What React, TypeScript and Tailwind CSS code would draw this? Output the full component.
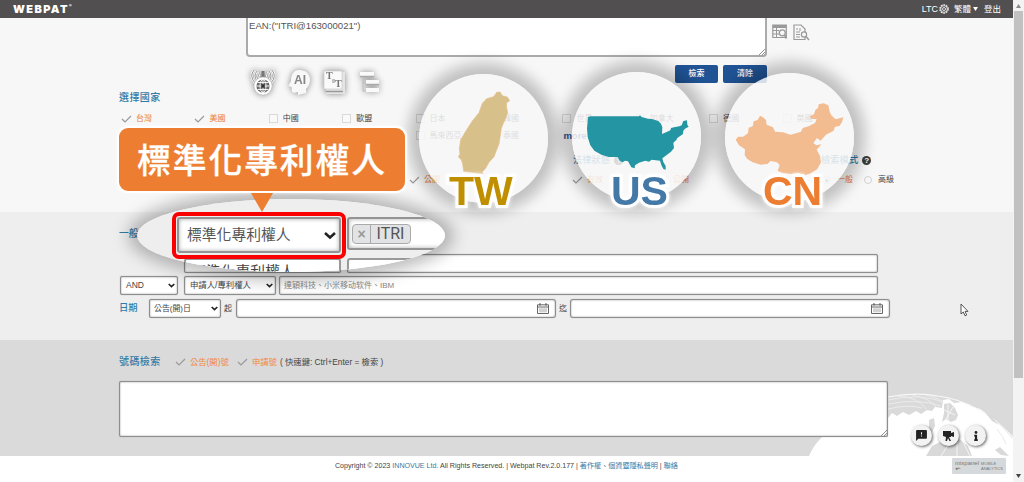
import React from "react";
import { MdFeedback } from "react-icons/md";
import { FaInfo } from "react-icons/fa";

const field =
  "rounded-[2px] border border-[#8e8e8e] bg-white shadow-[inset_0_0_2px_#999,0_0_1px_#999]";

function Tick() {
  return (
    <svg className="h-[8px] w-[11px] shrink-0" viewBox="0 0 11 8" fill="none" stroke="#9a9a9a" strokeWidth="1.2">
      <path d="M1 4 4 7 10 1" />
    </svg>
  );
}

function Box() {
  return <span className="ml-px h-[9px] w-[9px] shrink-0 border border-[#d9d9d9] bg-[#f9f9f9]" />;
}

function Country({ name, on = false }: { name: string; on?: boolean }) {
  return (
    <div className="flex items-center whitespace-nowrap">
      <span className="flex w-[16px] shrink-0 pl-px">{on ? <Tick /> : <Box />}</span>
      <span className={on ? "text-[#ed7d31]" : "text-[#444]"}>{name}</span>
    </div>
  );
}

function Help() {
  return (
    <span className="flex h-[9px] w-[9px] items-center justify-center rounded-full bg-[#3b3b3b] text-[8px] font-bold leading-none text-white">
      ?
    </span>
  );
}

function Select({ label, className }: { label: string; className: string }) {
  return (
    <div className={`${field} flex h-[19px] items-center justify-between ${className}`}>
      <span className="whitespace-nowrap">{label}</span>
      <svg className="mr-[2px] h-[5px] w-[7px]" viewBox="0 0 7 5" fill="none" stroke="#222" strokeWidth="1.6">
        <path d="M.7 1 3.5 3.7 6.3 1" />
      </svg>
    </div>
  );
}

function DateInput() {
  return (
    <div className={`${field} flex h-[19px] w-[320px] items-center justify-end rounded-[3px] pr-[6px]`}>
      <svg className="h-[11px] w-[12px]" viewBox="0 0 12 11" fill="none" stroke="#666" strokeWidth="1">
        <path d="M.5 1.8h11v8.7H.5zM.5 4h11" />
        <path d="M3 .2v2.3M9 .2v2.3" strokeWidth="1.4" />
        <path d="M3 5.3v4M5 5.3v4M7 5.3v4M9 5.3v4" strokeWidth=".6" />
      </svg>
    </div>
  );
}

function Grip() {
  return (
    <svg className="h-[6px] w-[6px]" viewBox="0 0 6 6" stroke="#777" strokeWidth=".8">
      <path d="M0 6 6 0M3 6 6 3" />
    </svg>
  );
}

function ToolIcons() {
  return (
    <svg
      className="h-[36px] w-[144px] overflow-visible drop-shadow-[0_0_3px_rgba(0,0,0,0.45)]"
      viewBox="0 0 144 36"
    >
      <g fill="none" stroke="#888" strokeWidth=".9">
        <path d="M8 6q-5 6 1 13M11 7q-4 5 0 10M13.500 8.500q-2 3 0 6M26 6q5 6-1 13M23 7q4 5 0 10M20.500 8.500q2 3 0 6" stroke="#fff" strokeWidth="2.200" />
        <path d="M8 6q-5 6 1 13M11 7q-4 5 0 10M13.500 8.500q-2 3 0 6M26 6q5 6-1 13M23 7q4 5 0 10M20.500 8.500q2 3 0 6" />
      </g>
      <path d="M15.500 7h3v7h-3z" fill="#777" />
      <circle cx="17" cy="22" r="9" fill="#fff" stroke="#bbb" strokeWidth=".5" />
      <circle cx="17" cy="22" r="6.600" fill="#6a6a6a" />
      <g fill="none" stroke="#fff" strokeWidth=".9">
        <ellipse cx="17" cy="22" rx="3" ry="6.600" />
        <path d="M10.400 22h13.200M17 15.400v13.200M11.500 18.500h11M11.500 25.500h11" />
      </g>
      <rect x="15.300" y="20.300" width="3.400" height="3.400" fill="#333" />
      <path d="M53 6c7 0 11 4 11 10 0 4-2 7-4 9v4l-8 2v-3c-3 1-6 1-6-1l-.500-4-3-1 2.500-5c0-7 3-11 8-11z" fill="#f8f8f8" />
      <text x="48" y="20" fontFamily="Liberation Sans" fontWeight="700" fontSize="12" fill="#858585">
        AI
      </text>
      <path d="M80 8h19v22H80z" fill="#e4e4e4" />
      <path d="M78 7h18v18H78z" fill="#fafafa" stroke="#ccc" strokeWidth=".7" />
      <path d="M80 27.500h17" stroke="#999" strokeWidth="1.500" />
      <g fontFamily="Liberation Serif" fontWeight="700" fill="#777">
        <text x="80" y="15" fontSize="10">T</text>
        <text x="89" y="23" fontSize="10">T</text>
      </g>
      <path d="M86 16h3M86 18h3" stroke="#888" />
      <path d="M117 12v15h6M117 19h6" fill="none" stroke="#bbb" />
      <path d="M114 8h14v4h-14zM120 16h13v4h-13zM120 24h13v4h-13z" fill="#fafafa" />
      <path d="M114 12.500h14M120 20.500h13" stroke="#aaa" strokeWidth="1.500" />
    </svg>
  );
}

function ResultIcons() {
  return (
    <svg className="ml-[5px] mt-[6px] h-[18px] w-[38px]" viewBox="0 0 38 18" fill="none" stroke="#999">
      <path d="M.8 1h13.500v12.500H.8z" strokeWidth="1.200" />
      <path d="M.8 2.500h13.500" strokeWidth="3" />
      <path d="M1 6.500h6M1 10h6M4.500 4v10" strokeWidth="1" />
      <circle cx="10.300" cy="8.800" r="3" fill="#f7f7f7" strokeWidth="1.300" />
      <path d="m12.500 11 2 3.500" strokeWidth="1.700" />
      <path d="M22 1h7l4 4v10.500H22z" strokeWidth="1.200" />
      <path d="M24 5h2M24 8h4M24 10.500h4M24 13h4M28 4v3" strokeWidth="1" />
      <circle cx="32" cy="10.500" r="2.600" fill="#f7f7f7" strokeWidth="1.200" />
      <path d="m34 12.500 3 3.500" strokeWidth="1.500" />
    </svg>
  );
}

const bubble =
  "absolute h-[129px] w-[129px] rounded-full bg-[#f7f7f7]/85 shadow-[0_0_14px_11px_rgba(0,0,0,0.22)]";
const code =
  "absolute whitespace-nowrap text-[41px] font-bold leading-none [-webkit-text-stroke:6px_white] [paint-order:stroke_fill] drop-shadow-[0_0_2px_rgba(255,255,255,0.9)]";

function CountryBubbles() {
  return (
    <>
      <div className={`${bubble} left-[419px] top-[74px]`}>
        <svg className="h-full w-full" viewBox="57 42 387 387" fill="#d8c08a" stroke="#e8bd8d" strokeWidth="2">
          <path d="M290 97 300 96 307 107 322 111 329 122 319 129 320 143 323 158 317 175 310 190 304 205 301 226 297 252 289 272 282 290 267 307 256 326 247 335 248 341 191 334 188 312 184 299 175 291 180 282 178 267 182 239 199 211 217 183 237 158 247 130 260 116 281 110Z" />
        </svg>
        <span className={`${code} left-[30px] top-[97px] text-[#bf8f00]`}>TW</span>
      </div>
      <div className={`${bubble} left-[572px] top-[72px]`}>
        <svg className="h-full w-full" viewBox="6 36 387 387" fill="#2495a3">
          <path d="M54 171 61 169 207 169 210 166 215 171 234 176 246 177 265 183 273 191 277 202 276 222 290 216 301 211 303 204 312 202 328 199 335 196 340 183 351 181 352 194 356 200 345 206 340 212 339 222 322 234 319 240 310 248 312 264 303 275 286 288 277 295 280 306 287 318 287 329 280 327 274 315 270 302 245 299 237 305 226 302 207 308 195 316 194 325 184 322 174 304 165 302 158 307 149 302 143 291 116 291 94 284 73 272 61 256 53 231 51 205Z" />
        </svg>
        <span className={`${code} left-[39px] top-[99px] text-[#4478a7]`}>US</span>
      </div>
      <div className={`${bubble} left-[725px] top-[73px]`}>
        <svg className="h-full w-full" viewBox="76 217 387 387" fill="#f2bb90">
          <path d="M108 417 115 408 130 408 145 398 147 381 159 377 162 362 174 358 181 345 190 350 199 358 201 372 220 380 226 393 250 395 272 402 289 398 304 393 309 382 327 377 346 367 351 356 333 354 331 347 343 341 347 328 355 322 357 311 372 308 386 314 390 333 395 344 408 356 431 350 427 365 419 376 406 378 402 390 379 402 363 420 352 412 341 427 350 434 365 431 351 447 361 466 364 485 353 505 334 518 316 524 295 516 274 520 249 517 234 511 240 493 232 485 213 481 203 490 183 492 159 485 142 474 135 463 136 446 118 434Z" />
        </svg>
        <span className={`${code} left-[38px] top-[98px] text-[#ed7d31]`}>CN</span>
      </div>
    </>
  );
}

function Magnifier() {
  return (
    <>
      <div className="absolute left-[137px] top-[199px] h-[73px] w-[308px] overflow-hidden rounded-[50%] bg-[#eee]">
        <div className="flex gap-[6px] pl-[40px] pt-[18px]">
          <div className="flex h-[36px] w-[164px] shrink-0 items-center justify-between rounded-[3px] border-2 border-[#949494] bg-white pl-[8px] pr-[3px] shadow-[inset_0_0_4px_#aaa]">
            <span className="whitespace-nowrap text-[14.800px] leading-none text-[#555]">標準化專利權人</span>
            <svg className="h-[9px] w-[12px]" viewBox="0 0 12 9" fill="none" stroke="#222" strokeWidth="2.600">
              <path d="m1 2 5 4.500L11 2" />
            </svg>
          </div>
          <div className="flex h-[33px] w-[130px] shrink-0 items-center rounded-[3px] border-2 border-[#949494] bg-white pl-[3px] shadow-[inset_0_0_4px_#aaa]">
            <div className="flex h-[20px] items-stretch rounded-[4px] border border-[#aaa] bg-[#e2e3e4]">
              <span className="flex w-[18px] items-center justify-center border-r border-[#aaa] text-[14px] font-bold leading-none text-[#999]">
                ×
              </span>
              <span className="flex w-[39px] items-center justify-center font-['Roboto',sans-serif] text-[16px] leading-none text-[#555]">ITRI</span>
            </div>
          </div>
        </div>
        <div className="flex gap-[6px] pl-[47px] pt-[5px]">
          <div className="h-[30px] w-[157px] shrink-0 rounded-t-[3px] border-2 border-[#999] bg-white pl-[5px] pt-[3px] text-[14.800px] leading-[18px] text-[#444]">
            標準化專利權人
          </div>
          <div className="h-[30px] w-[130px] shrink-0 rounded-t-[3px] border-2 border-[#999] bg-white" />
        </div>
      </div>
      <div className="absolute left-[172px] top-[212px] h-[47px] w-[174px] rounded-[7px] border-4 border-[#fb0000]" />
      <div className="absolute left-[117px] top-[126px] flex h-[67px] w-[290px] items-center justify-center rounded-[11px] border-2 border-white bg-[#ed7d31] pb-[2px] font-['Noto_Sans_CJK_TC',sans-serif] text-[33.800px] font-medium leading-none tracking-[1.900px] text-white shadow-[0_0_3px_rgba(255,255,255,0.8)] [-webkit-text-stroke:0.3px_white]">
        <span className="whitespace-nowrap">標準化專利權人</span>
      </div>
      <svg className="absolute left-[251px] top-[193px] h-[19px] w-[22px]" viewBox="0 0 22 19" fill="#ed7d31">
        <path d="M0 0h22L11 19Z" />
      </svg>
    </>
  );
}

function Globe() {
  return (
    <svg className="absolute bottom-0 right-0 h-[63px] w-[205px]" viewBox="808 393 205 63">
      <path
        d="M809 456Q813 446 822 437H888V418L892 413 897 416 903 412 909 415 916 411 921 414 927 410 932 411 935 407 942 408 943 400 949 399 954 403 962 402 971 406 980 409 990 416 1000 424 1007 431 1013 438V456Z"
        fill="#fff"
      />
      <path d="M888 397Q915 392 938 396 978 401 1013 437" fill="none" stroke="#f7f7f7" strokeWidth="1.200" />
      <g fill="none" stroke="#efefef" strokeWidth=".8">
        <path d="M888 400q32-7 56 2M888 404q30-6 53 2M888 409q20-5 34-1M898 396q20 1 28 13M912 395q18 3 24 12M926 395q14 3 17 8" />
      </g>
      <path
        d="M944 404 950 403 955 408 958 415 956 420 951 422 946 419 942 422 944 413ZM929 420 934 418 935 426 932 432 929 430ZM926 456 932 446 942 441 958 438 968 446 972 456ZM995 450 1000 447 1009 456 1001 455ZM984 411 992 417 999 425 992 421Z"
        fill="#d9d9d9"
      />
      <g fill="none" stroke="#fafafa" strokeWidth=".8">
        <path d="M948 404v17M953 407l-7 12M942 409l13 6M951 440l-10 16M957 438v18M962 440l8 16" />
      </g>
      <path d="M996 420q9 9 16 18M1006 444q-3-8-9-15" fill="none" stroke="#e3e3e3" strokeWidth=".8" />
    </svg>
  );
}

const roundBtn =
  "flex h-[21px] w-[21px] items-center justify-center rounded-full bg-[#f2f2f2] text-[#222] shadow-[1px_1px_3px_rgba(0,0,0,0.6)]";

export default function App() {
  return (
    <div className="relative flex h-[482px] w-[1024px] overflow-hidden bg-white font-['Liberation_Sans','Noto_Sans_CJK_TC',sans-serif] text-[8px] leading-none text-[#444]">
      <div className="flex w-[1013px] shrink-0 flex-col">
        <header className="flex h-[18px] shrink-0 items-center justify-between bg-[#524f50] pl-[13px] pr-[12px] text-white">
          <div className="flex items-start font-['Inter',sans-serif] text-[11px] font-black tracking-[1.400px]">
            WEBPAT<span className="text-[4px]">®</span>
          </div>
          <div className="flex items-center whitespace-nowrap text-[8.500px]">
            <span className="text-[9px]">LTC</span>
            <svg className="ml-px h-[10px] w-[10px]" viewBox="0 0 10 10" fill="none" stroke="#eee">
              <circle cx="5" cy="5" r="4.100" strokeDasharray="1.800 .8" strokeWidth="1.300" />
              <circle cx="5" cy="5" r="3.300" strokeWidth=".8" />
              <circle cx="5" cy="5" r="1.500" strokeWidth=".9" />
            </svg>
            <span className="ml-[5px]">繁體</span>
            <svg className="ml-[2px] h-[4px] w-[5px]" viewBox="0 0 5 4" fill="#fff"><path d="M0 0h5L2.500 4z" /></svg>
            <span className="ml-[6px]">登出</span>
          </div>
        </header>

        <section className="flex h-[194px] shrink-0 flex-col bg-[#f7f7f7]">
          <div className="flex h-[39px] pl-[246px]">
            <div className="flex w-[521px] items-end justify-between rounded-b-[4px] border-x-2 border-b-2 border-[#aaa] bg-white">
              <span className="self-start pl-[1px] pt-[3px] text-[9.600px] text-[#555]">EAN:("ITRI@163000021")</span>
              <Grip />
            </div>
            <ResultIcons />
          </div>
          <div className="flex h-[47px] shrink-0">
            <h2 className="w-[246px] self-end pb-px pl-[119px] text-[10px] font-medium tracking-[0.4px] text-[#337ba7]">選擇國家</h2>
            <div className="w-[429px] pt-[7px]">
              <ToolIcons />
            </div>
            <div className="flex gap-[5px] pt-[8px] font-medium text-white">
              <button className="h-[18px] w-[43px] rounded-[2px] bg-[#1f5394]">檢索</button>
              <button className="h-[18px] w-[44px] rounded-[2px] bg-[#1f5394]">清除</button>
            </div>
          </div>
          <div className="ml-[120px] mt-[6px] grid w-[734px] shrink-0 grid-cols-10 grid-rows-[17px_17px]">
            <Country name="台灣" on />
            <Country name="美國" on />
            <Country name="中國" />
            <Country name="歐盟" />
            <Country name="日本" />
            <Country name="韓國" />
            <Country name="世界" />
            <Country name="加拿大" />
            <Country name="德國" />
            <Country name="英國" />
            <div className="col-start-5 flex"><Country name="馬來西亞" /></div>
            <Country name="泰國" />
            <div className="flex items-center pl-[3px] text-[9.500px] font-bold text-[#1f5394]">more</div>
          </div>
          <div className="mt-[9px] flex h-[16px] shrink-0 items-center text-[9.300px] font-medium text-[#337ba7]">
            <div className="ml-[573px] flex w-[248px] items-center gap-[4px]">法律狀態<Help /></div>
            <div className="flex items-center gap-[4px]">檢索模式<Help /></div>
          </div>
          <div className="mt-px flex h-[20px] shrink-0 items-center pl-[409px]">
            <Tick />
            <span className="ml-[4px] w-[148px] text-[#ed7d31]">公開</span>
            <Tick />
            <span className="ml-[4px] w-[70px] text-[#ed7d31]">有效</span>
            <Tick />
            <span className="ml-[5px] w-[149px] text-[#ed7d31]">公開</span>
            <span className="mr-[7px] flex h-[8px] w-[8px] items-center justify-center rounded-full border border-[#ccc]">
              <span className="h-[3px] w-[3px] rounded-full bg-[#777]" />
            </span>
            <span className="w-[27px] text-[#ed7d31]">一般</span>
            <span className="mr-[6px] h-[8px] w-[8px] rounded-full border border-[#d2d2d2]" />
            <span>高級</span>
          </div>
        </section>

        <section className="flex h-[128px] shrink-0 flex-col bg-[#eee] pl-[119px]">
          <div className="flex h-[42px] items-center pt-[2px] text-[9.800px] font-medium text-[#337ba7]">一般</div>
          <div className="flex gap-[6px] pl-[65px]">
            <div className={`${field} h-[19px] w-[157px]`} />
            <div className={`${field} h-[19px] w-[531px]`} />
          </div>
          <div className="mt-[3px] flex pl-px text-[9px]">
            <Select label="AND" className="mr-[6px] w-[58px] pl-[5px] text-[8.500px]" />
            <Select label="申請人/專利權人" className="mr-[3px] w-[92px] pl-[5px] text-[8.400px]" />
            <div className={`${field} flex h-[19px] w-[599px] items-center pl-[4px] text-[8px] text-[#888]`}>
              達穎科技、小米移动软件、IBM
            </div>
          </div>
          <div className="mt-[4px] flex items-center">
            <span className="w-[30px] text-[9.300px] font-medium text-[#337ba7]">日期</span>
            <Select label="公告(開)日" className="w-[72px] pl-[4px] text-[7.900px]" />
            <span className="w-[15px] pl-[3px]">起</span>
            <DateInput />
            <span className="w-[14px] pl-[3px]">迄</span>
            <DateInput />
          </div>
        </section>

        <section className="relative h-[116px] shrink-0 bg-[#dadada] pl-[119px]">
          <Globe />
          <div className="flex h-[41px] items-center pt-[3px] text-[8.300px]">
            <h2 className="w-[56px] whitespace-nowrap text-[10px] font-medium tracking-[0.4px] text-[#337ba7]">號碼檢索</h2>
            <Tick />
            <span className="ml-[4px] w-[47px] whitespace-nowrap text-[#f0883f]">公告(開)號</span>
            <Tick />
            <span className="ml-[4px] w-[25px] whitespace-nowrap text-[#f0883f]">申請號</span>
            <span className="ml-[3px] whitespace-nowrap">( 快速鍵: Ctrl+Enter = 檢索 )</span>
          </div>
          <div className={`${field} relative flex h-[56px] w-[769px] items-end justify-end`}>
            <Grip />
          </div>
          <div className="absolute left-[911px] top-[85px] flex gap-[6px]">
            <button className={roundBtn}><MdFeedback size={13} /></button>
            <button className={roundBtn}>
              <svg className="h-[11px] w-[13px]" viewBox="0 0 13 11" fill="#222">
                <path d="M1 1h8v2l3-1v5L9 6v1H7l2 4H7.500L6 8l-1 3H3.500L4 7 1 6z" />
              </svg>
            </button>
            <button className={roundBtn}><FaInfo size={10} /></button>
          </div>
        </section>

        <footer className="flex h-[26px] shrink-0 bg-white">
          <div className="ml-[335px] w-[617px] whitespace-nowrap pt-[7px] text-[7.100px]">
            Copyright © 2023 <span className="text-[#337ba7]">INNOVUE Ltd.</span> All Rights Reserved. | Webpat Rev.2.0.177 |{" "}
            <span className="text-[#337ba7]">著作權、個資暨隱私聲明</span> | <span className="text-[#337ba7]">聯絡</span>
          </div>
          <div className="mt-[2px] flex h-[16px] w-[54px] justify-between rounded-[1px] bg-[#d6d9dc] px-[3px] pt-[3px] text-[#777]">
            <div className="text-[6px] leading-[5px]">mixpanel<div className="text-[5px] leading-[5px]">●•·</div></div>
            <div className="text-[4px] leading-[5px]">MOBILE<br />ANALYTICS</div>
          </div>
        </footer>
      </div>

      <div className="flex w-[11px] shrink-0 flex-col items-center bg-[#f3f3f3]">
        <svg className="mt-[4px] h-[4px] w-[5px]" viewBox="0 0 5 4" fill="#888"><path d="M0 4h5L2.500 0z" /></svg>
        <div className="mt-[3px] h-[367px] w-[9px] bg-[#c1c1c1]" />
        <svg className="mb-[4px] mt-auto h-[4px] w-[5px]" viewBox="0 0 5 4" fill="#444"><path d="M0 0h5L2.500 4z" /></svg>
      </div>

      <div className="absolute left-[137px] top-[199px] h-[73px] w-[308px] rounded-[50%] shadow-[0_0_16px_9px_rgba(0,0,0,0.26)]" />
      <CountryBubbles />
      <Magnifier />
      <svg className="absolute left-[960px] top-[303px] h-[14px] w-[9px]" viewBox="0 0 9 14" fill="#fff" stroke="#444" strokeWidth=".9">
        <path d="M1 1v10l2.300-2L5 12.800l1.700-.8L5 8.400h3z" />
      </svg>
    </div>
  );
}
